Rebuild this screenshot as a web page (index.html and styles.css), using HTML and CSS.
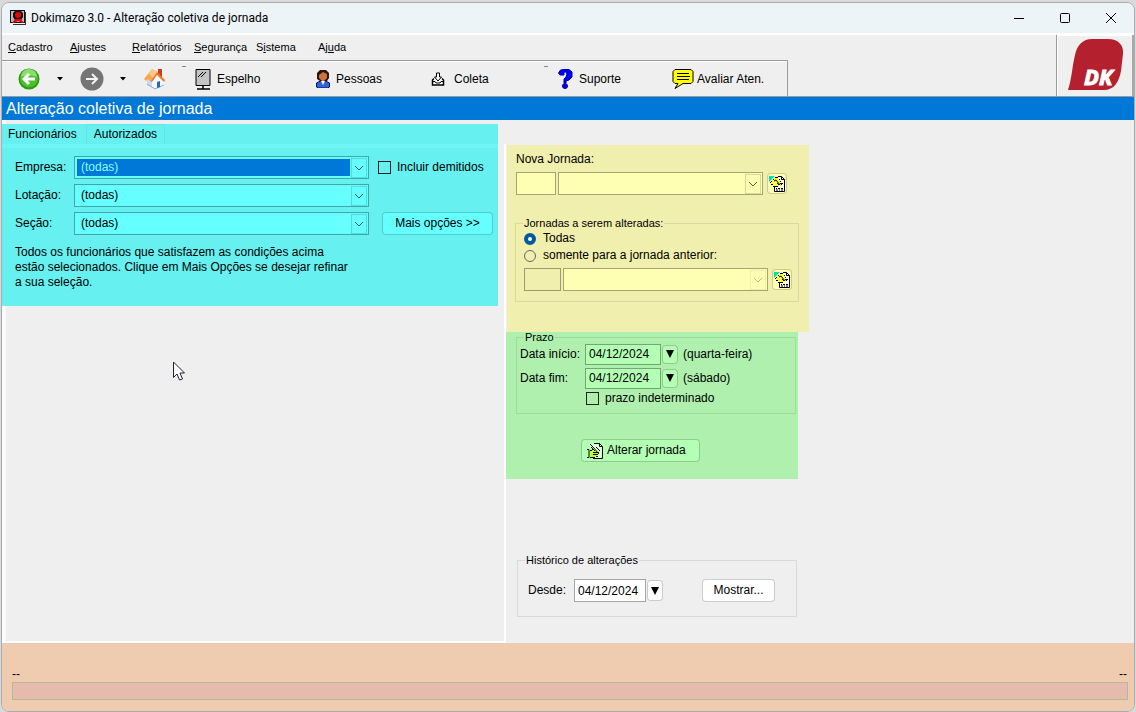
FILE: index.html
```html
<!DOCTYPE html>
<html lang="pt-BR">
  <head>
    <meta charset="UTF-8" />
    <meta name="viewport" content="width=device-width, initial-scale=1.0" />
    <title>Dokimazo 3.0 - Alteração coletiva de jornada</title>
    <link rel="stylesheet" href="styles.css">
  </head>
  <body>
    <!-- shared icons -->
    <svg class="sprite" aria-hidden="true">
      <symbol id="chevron" viewBox="0 0 16 20">
        <rect x="0.5" y="0.5" width="15" height="19" fill="none" stroke="#000" stroke-opacity="0.15" />
        <path d="M4 8 L8 12 L12 8" fill="none" stroke="#000" stroke-opacity="0.65" />
      </symbol>
      <symbol id="sheet" viewBox="0 0 16 16">
        <path d="M5.500 .5h7l3 3v12h-10z" fill="#fff" fill-opacity="0.6" />
        <path d="M9 .5h3.500l3 3v12h-10V11M12.500 .5v3h3" fill="none" stroke="#000" />
        <path d="M0 0h6L0 6z" fill="#00e0a0" />
        <path d="M1.500 6.500L6.500 1.500l3 1 3 6-1 2-2-1-1 1-4-1z" fill="#ff4" />
        <path d="M1 6.500h1M2 8.500h2M4 10.500h5M6 1.500h3M4 3.500h1M2 5.500h1M10 3.500h1M11 5.500h1M12 8.500h1" stroke="#000" />
        <path d="M5 5l2-1 4 5M8 7l2 2" fill="none" stroke="#000" />
        <path d="M11 7.500h3M7 12.500h1m1 0h2m1 0h2M7 14h2m1 0h1m1 0h2" stroke="#000" />
      </symbol>
    </svg>

    <div class="window">
      <header class="titlebar">
        <svg class="app-icon" viewBox="0 0 16 16" width="16" height="16">
          <path d="M0 0h15v13H0z" fill="#111" />
          <path d="M1 1h13v11H1z" fill="#b9b9c4" />
          <path d="M5 1h6l2 2v4l-2 3H5L3 7V3z" fill="#111" />
          <circle cx="8" cy="5" r="3" fill="#e00" />
          <path d="M2 13l3-4h6l3 4h-2l-4-2-4 2z" fill="#e00" />
          <path d="M15 2h1v13H3v-1h12z" fill="#333" />
        </svg>
        <span class="title">Dokimazo 3.0 - Alteração coletiva de jornada</span>
        <div class="window-buttons">
          <button type="button" aria-label="Minimizar"><svg viewBox="0 0 12 12" width="12" height="12"><path d="M1 6.500h10" /></svg></button>
          <button type="button" aria-label="Maximizar"><svg viewBox="0 0 12 12" width="12" height="12"><rect x="1.500" y="1.500" width="9" height="9" rx="1" /></svg></button>
          <button type="button" aria-label="Fechar"><svg viewBox="0 0 12 12" width="12" height="12"><path d="M1 1l10 10M11 1L1 11" /></svg></button>
        </div>
      </header>

      <div class="top">
        <div class="bars">
          <nav class="menu">
            <a href="#"><u>C</u>adastro</a>
            <a href="#"><u>A</u>justes</a>
            <a href="#"><u>R</u>elatórios</a>
            <a href="#"><u>S</u>egurança</a>
            <a href="#">S<u>i</u>stema</a>
            <a href="#">Aj<u>u</u>da</a>
          </nav>
          <div class="toolbar">
            <button type="button" aria-label="Voltar">
              <svg viewBox="0 0 22 22" width="22" height="22">
                <circle cx="11" cy="11" r="10.500" fill="#2c9a14" />
                <circle cx="11" cy="10.500" r="9" fill="#4cbf2a" />
                <path d="M3 9a8 8 0 0 1 16 0c-5-2-11-2-16 0z" fill="#8ade6c" />
                <path d="M17 11H7M11 6l-5 5 5 5" fill="none" stroke="#fff" stroke-width="3" />
              </svg>
            </button>
            <button type="button" aria-label="Histórico anterior"><svg viewBox="0 0 6 4" width="6" height="4"><path d="M0 0h6L3 3.500z" /></svg></button>
            <button type="button" aria-label="Avançar">
              <svg viewBox="0 0 24 24" width="24" height="24">
                <circle cx="12" cy="12" r="11.500" fill="#757575" />
                <path d="M6 12h11M12 7l5 5-5 5" fill="none" stroke="#f4f4f4" stroke-width="2" />
              </svg>
            </button>
            <button type="button" aria-label="Próximo histórico"><svg viewBox="0 0 6 4" width="6" height="4"><path d="M0 0h6L3 3.500z" /></svg></button>
            <button type="button" aria-label="Início">
              <svg viewBox="0 0 22 22" width="22" height="22">
                <path d="M14 1h4v8h-4z" fill="#c8401c" />
                <path d="M3 11l5-6 4 8v8l-9-4z" fill="#c9daf6" />
                <path d="M8 13l6-7 6 7v5l-9 4-3-2z" fill="#f3f7ff" />
                <path d="M3 16l8 5 9-4" fill="none" stroke="#88a6dc" />
                <path d="M0 11L8 1l6 3-7 10-3-3-2 2z" fill="#f9a74e" />
                <path d="M8 1l6 3-4 6-5-4z" fill="#ffc98a" />
                <path d="M13 4l8 8-1 2-7-7-5 7-1-1z" fill="#ec7a28" />
                <path d="M13 14l3-1v6l-3 1z" fill="#2f62b8" />
              </svg>
            </button>
            <span class="grip"></span>
            <button type="button">
              <svg viewBox="0 0 16 22" width="16" height="22">
                <path d="M1 1.500h14v16H1z" fill="#c4c4c4" stroke="#000" />
                <path d="M3 9l5-5M6 9l5-5" stroke="#000" />
                <path d="M8 18v3M2 21h13" stroke="#000" stroke-width="1.500" />
              </svg>
              Espelho
            </button>
            <button type="button">
              <svg viewBox="0 0 14 18" width="14" height="18">
                <path d="M.5 17v-4l4-2h5l4 2v4l-2 1h-9z" fill="#3264d8" stroke="#001060" />
                <path d="M5 11h4l-2 4z" fill="#fff" />
                <path d="M4 0h6l3 3v5l-2 3H4L1 9V3z" fill="#2c140c" />
                <path d="M3 5l4-3 4 2v4l-3 3H6L3 8z" fill="#c8743c" />
              </svg>
              Pessoas
            </button>
            <button type="button" class="collect">
              <svg viewBox="0 0 14 14" width="14" height="14">
                <path d="M3 6.500L1.500 8v5h11V8L11 6.500" fill="#fff" stroke="#000" stroke-width="1.500" />
                <path d="M5.500 1h3v4h2L7 9 3.500 5h2z" fill="#fff" stroke="#000" />
                <path d="M2 9.500h2l1 1.500h4l1-1.500h2" fill="none" stroke="#000" />
              </svg>
              Coleta
            </button>
            <span class="grip"></span>
            <button type="button">
              <svg viewBox="0 0 15 20" width="15" height="20">
                <path d="M.5 4l2-3L6 .5h5L14 3v5l-3 3-3 1v2H6v-4l2-2 1-3-1-2H6v3L4 6H2z" fill="#00f" stroke="#0000a0" />
                <circle cx="7" cy="17" r="2.500" fill="#00f" stroke="#0000a0" />
              </svg>
              Suporte
            </button>
            <button type="button" class="rate">
              <svg viewBox="0 0 22 20" width="22" height="20">
                <path d="M3 .5h16l2 2v10l-2 2h-8l-8 5 3-5H3l-2-2v-10z" fill="#ff0" stroke="#000" />
                <path d="M5 4.500h12M5 7.500h13M5 10.500h12" stroke="#000" />
              </svg>
              Avaliar Aten.
            </button>
          </div>
        </div>
        <div class="logo">
          <svg viewBox="0 0 75 60" width="75" height="60" role="img" aria-label="DK">
            <path d="M11 55C15 43 15 32 18 20 20 10 26 4 35 4H51C61 4 67 10 66 19L64 36C62 47 57 55 47 55Z" fill="#b5202e" />
            <text x="27" y="50" class="logo-text">DK</text>
          </svg>
        </div>
      </div>

      <h1>Alteração coletiva de jornada</h1>

      <main>
        <section class="employees">
          <div class="selection">
            <div class="tabs" role="tablist">
              <button type="button" role="tab" aria-selected="true" class="tab">Funcionários</button>
              <button type="button" role="tab" aria-selected="false" class="tab other">Autorizados</button>
            </div>
            <div class="filters">
              <label for="empresa">Empresa:</label>
              <div class="combo">
                <select id="empresa" class="active"><option>(todas)</option></select>
                <svg><use href="#chevron" /></svg>
              </div>
              <label class="check"><input type="checkbox"> Incluir demitidos</label>

              <label for="lotacao">Lotação:</label>
              <div class="combo">
                <select id="lotacao"><option>(todas)</option></select>
                <svg><use href="#chevron" /></svg>
              </div>
              <span></span>

              <label for="secao">Seção:</label>
              <div class="combo">
                <select id="secao"><option>(todas)</option></select>
                <svg><use href="#chevron" /></svg>
              </div>
              <button type="button" class="push more">Mais opções &gt;&gt;</button>
            </div>
            <p>
              Todos os funcionários que satisfazem as condições acima<br>
              estão selecionados. Clique em Mais Opções se desejar refinar<br>
              a sua seleção.
            </p>
          </div>
        </section>

        <section class="changes">
          <div class="shift">
            <label for="nova">Nova Jornada:</label>
            <div class="picker">
              <input type="text" id="nova" class="code">
              <div class="combo">
                <select aria-label="Nova jornada"><option></option></select>
                <svg><use href="#chevron" /></svg>
              </div>
              <button type="button" class="push lookup" aria-label="Ver jornadas"><svg><use href="#sheet" /></svg></button>
            </div>
            <fieldset>
              <legend>Jornadas a serem alteradas:</legend>
              <label class="check"><input type="radio" name="alvo" checked> Todas</label>
              <label class="check"><input type="radio" name="alvo"> somente para a jornada anterior:</label>
              <div class="picker previous">
                <input type="text" class="code" aria-label="Código da jornada anterior" disabled>
                <div class="combo">
                  <select aria-label="Jornada anterior" disabled><option></option></select>
                  <svg><use href="#chevron" /></svg>
                </div>
                <button type="button" class="push lookup" aria-label="Ver jornadas anteriores"><svg><use href="#sheet" /></svg></button>
              </div>
            </fieldset>
          </div>

          <div class="period">
            <fieldset>
              <legend>Prazo</legend>
              <div class="date-row">
                <label for="inicio">Data início:</label>
                <input type="text" id="inicio" class="date" value="04/12/2024">
                <button type="button" class="push drop" aria-label="Abrir calendário"><svg viewBox="0 0 8 8"><path d="M0 0h8L4 8z" /></svg></button>
                <span>(quarta-feira)</span>
              </div>
              <div class="date-row">
                <label for="fim">Data fim:</label>
                <input type="text" id="fim" class="date" value="04/12/2024">
                <button type="button" class="push drop" aria-label="Abrir calendário"><svg viewBox="0 0 8 8"><path d="M0 0h8L4 8z" /></svg></button>
                <span>(sábado)</span>
              </div>
              <label class="check open-ended"><input type="checkbox"> prazo indeterminado</label>
            </fieldset>
            <button type="button" class="push apply">
              <svg viewBox="0 0 16 16" width="16" height="16">
                <path d="M5.500 .5h7l3 3v12h-10z" fill="#fff" fill-opacity="0.5" />
                <path d="M7 .5h5.500l3 3v12H6M12.500 .5v3h3" fill="none" stroke="#000" />
                <path d="M3 7.500l3-1 5 2v3l-3 3H5l-2-1z" fill="#bf2" />
                <path d="M0 6.500h2v8H0M3 7.500h2M5 6.500h2M3 14.500h5M9 13.500h2" fill="none" stroke="#000" />
                <path d="M3 1l3 3 6 7M4 4l4 4M6 9.500h6M6 11.500h5M9 4l4 4" fill="none" stroke="#000" />
              </svg>
              Alterar jornada
            </button>
          </div>

          <fieldset class="history">
            <legend>Histórico de alterações</legend>
            <label for="desde">Desde:</label>
            <input type="text" id="desde" class="date" value="04/12/2024">
            <button type="button" class="push drop" aria-label="Abrir calendário"><svg viewBox="0 0 8 8"><path d="M0 0h8L4 8z" /></svg></button>
            <button type="button" class="push show">Mostrar...</button>
          </fieldset>
        </section>
      </main>

      <footer>
        <div class="status"><span>--</span><span>--</span></div>
        <div class="progress"></div>
      </footer>
    </div>

    <svg class="pointer" viewBox="0 0 12 20" width="12" height="20" aria-hidden="true">
      <path d="M.5 1v15.500l3.500-3.500 2.500 6 3-1-2.500-6h4.500z" fill="#fff" stroke="#223" />
    </svg>
  </body>
</html>
```

FILE: styles.css
```css
* {
  box-sizing: border-box;
}
body {
  margin: 0;
  min-height: 100vh;
  display: flex;
  padding: 2px 1px 0;
  background: #dadada;
  color: #000;
  font: 12px/15px "Liberation Sans", Arial, sans-serif;
}
button,
input,
select {
  margin: 0;
  font: inherit;
  color: inherit;
}
button {
  padding: 0;
  border: 0;
  background: none;
}
.sprite {
  position: absolute;
  width: 0;
  height: 0;
}
.window {
  flex: 1;
  display: flex;
  flex-direction: column;
  overflow: hidden;
  border: 1px solid #a9adaf;
  border-radius: 8px;
  background: #efefef;
}

/* title bar */
.titlebar {
  display: flex;
  align-items: center;
  height: 32px;
  padding-left: 8px;
  background: #ecf4f8;
  border-bottom: 2px solid #fff;
}
.title {
  margin-left: 5px;
  font: 12px/16px Roboto, "Open Sans", sans-serif;
}
.window-buttons {
  display: flex;
  margin-left: auto;
}
.window-buttons button {
  width: 46px;
  height: 28px;
}
.window-buttons svg {
  display: block;
  margin: auto;
  fill: none;
  stroke: #000;
}

/* menu and toolbar */
.top {
  display: flex;
  border-bottom: 1px solid #9a9a9a;
}
.bars {
  flex: 1;
}
.menu {
  display: grid;
  grid-template-columns: repeat(6, 62px);
  height: 25px;
  padding: 5px 0 0 6px;
  font-size: 11px;
}
.menu a {
  color: inherit;
  text-decoration: none;
}
.toolbar {
  display: grid;
  grid-template-columns: 39px 23px 40px 24px 38px 13px 121px 115px 113px 14px 114px 1fr;
  align-items: center;
  max-width: 786px;
  height: 36px;
  padding: 1px 0 0 16px;
  border-top: 1px solid #9a9a9a;
  border-right: 1px solid #9a9a9a;
  box-shadow: inset 0 1px #fff;
}
.toolbar button {
  display: flex;
  align-items: center;
  gap: 6px;
  white-space: nowrap;
}
.toolbar .collect {
  gap: 9px;
}
.toolbar .rate {
  gap: 3px;
}
.grip {
  align-self: start;
  width: 4px;
  height: 1px;
  margin-top: 4px;
  background: #888;
}
.logo {
  border-left: 1px solid #9a9a9a;
  border-right: 2px solid #a9a9a9;
  box-shadow: inset 1px 1px #fff;
}
.logo svg {
  display: block;
}
.logo-text {
  fill: #fff;
  font: italic bold 22px "Open Sans", sans-serif;
  stroke: #fff;
}
h1 {
  margin: 0;
  padding: 0 4px;
  background: #0078d7;
  color: #fff;
  font-size: 16px;
  font-weight: normal;
  line-height: 23px;
}

/* shared controls */
.combo {
  display: grid;
  flex: 1;
}
.combo select,
.combo svg {
  grid-area: 1 / 1;
}
.combo svg {
  justify-self: end;
  align-self: center;
  width: 16px;
  height: 20px;
  margin-right: 2px;
  pointer-events: none;
}
select,
input[type="text"] {
  width: 100%;
  height: 23px;
  padding: 0 4px;
  appearance: none;
  background: var(--field);
  border: 1px solid rgba(0, 0, 0, 0.35);
  border-radius: 0;
  opacity: 1;
}
.combo select {
  padding: 0 20px 0 6px;
}
.combo select.active {
  background: linear-gradient(#0078d7, #0078d7) 2px 2px / calc(100% - 20px) calc(100% - 4px) no-repeat var(--field);
  color: #8ff;
}
.combo select:disabled + svg {
  opacity: 0.4;
}
.push {
  height: 23px;
  background: var(--field);
  border: 1px solid rgba(0, 0, 0, 0.2);
  border-radius: 4px;
}
.check {
  display: flex;
  align-items: center;
  gap: 6px;
}
.check input {
  appearance: none;
  width: 13px;
  height: 13px;
  border: 1px solid #222;
}
.check input[type="radio"] {
  width: 12px;
  height: 12px;
  margin-right: 1px;
  border-color: #666;
  border-radius: 50%;
}
.check input[type="radio"]:checked {
  border: 4px solid #005a9e;
  background: #fff;
}
fieldset {
  min-width: 0;
  margin: 0;
  padding: 0;
  border: 1px solid rgba(0, 0, 0, 0.09);
}
legend {
  margin-left: 7px;
  padding: 0 1px;
  font-size: 11px;
  line-height: 13px;
}

/* employee selection */
main {
  flex: 1;
  display: flex;
}
.employees {
  flex: 0 0 504px;
  padding: 4px 8px 0 0;
  border-bottom: 2px solid #fff;
  background:
    linear-gradient(#fff, #fff) right 24px / 2px 100% no-repeat,
    linear-gradient(#fafafa, #fafafa) 0 0 / 4px 100% no-repeat;
}
.selection {
  --field: #6ff;
  padding-bottom: 16px;
  background: #66f1f0;
}
.tabs {
  display: flex;
  align-items: flex-end;
  height: 24px;
  padding-left: 6px;
  border-bottom: 4px solid #6df6f5;
}
.tab {
  height: 20px;
}
.tab.other {
  margin-left: 9px;
  padding: 0 7px;
  border: 1px solid #5fe6e6;
  border-bottom: 0;
}
.filters {
  display: grid;
  grid-template-columns: 59px 295px auto;
  row-gap: 5px;
  align-items: center;
  padding: 8px 5px 0 13px;
}
.filters .check {
  margin-left: 9px;
}
.more {
  margin-left: 13px;
}
.selection p {
  margin: 10px 0 0 13px;
}

/* shift change */
.changes {
  width: 303px;
}
.shift {
  --field: #ffffb3;
  margin: 25px 0 0 1px;
  padding: 7px 10px 30px 8px;
  background: #f0efae;
}
.shift > label {
  padding-left: 1px;
}
.picker {
  display: flex;
  align-items: center;
  gap: 2px;
  padding: 5px 12px 0 1px;
}
.picker .code {
  width: 40px;
}
.picker .code:disabled {
  background: transparent;
}
.lookup {
  width: 20px;
  height: 21px;
  margin-left: 2px;
}
.lookup svg {
  display: block;
  width: 16px;
  height: 16px;
  margin: auto;
}
.shift fieldset {
  margin-top: 22px;
  padding-bottom: 10px;
}
.shift fieldset .check {
  height: 17px;
  padding-left: 8px;
}
.picker.previous {
  padding: 4px 6px 0 8px;
}
.previous .code {
  width: 37px;
}

/* period */
.period {
  --field: #b3ffb3;
  width: 292px;
  padding: 0 2px 17px 10px;
  background: #aff0af;
}
.period fieldset {
  padding-bottom: 6px;
}
.period legend {
  line-height: 10px;
}
.date-row {
  display: flex;
  align-items: center;
  height: 24px;
  padding-left: 3px;
}
.date-row label {
  width: 65px;
}
input.date {
  width: 76px;
  height: 21px;
  padding: 0 3px;
}
.drop {
  width: 16px;
  height: 19px;
  margin-left: 1px;
}
.drop svg {
  display: block;
  width: 8px;
  height: 8px;
  margin: auto;
}
.date-row span {
  margin-left: 5px;
}
.open-ended {
  height: 17px;
  padding-left: 69px;
}
.apply {
  display: flex;
  align-items: center;
  gap: 4px;
  width: 119px;
  margin: 25px 0 0 65px;
  padding-left: 5px;
}

/* history */
.history {
  --field: #fff;
  display: flex;
  align-items: center;
  width: 280px;
  margin: 75px 0 0 11px;
  padding: 12px 10px 14px;
}
.history legend {
  margin-left: -3px;
}
.history label {
  width: 46px;
}
.history .date {
  width: 72px;
  height: 23px;
}
.history .drop {
  height: 21px;
}
.show {
  width: 73px;
  margin-left: 39px;
}

/* status area */
footer {
  padding: 24px 6px 11px 10px;
  background: #efcbb0;
}
.status {
  display: flex;
  justify-content: space-between;
  padding-right: 1px;
}
.progress {
  height: 18px;
  border: 1px solid #b9b49c;
  background: #e5bbab;
}
.pointer {
  position: absolute;
  left: 173px;
  top: 361px;
}
```
